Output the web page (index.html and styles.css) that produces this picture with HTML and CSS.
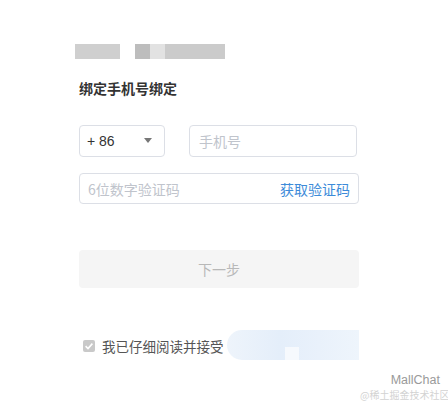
FILE: index.html
```html
<!DOCTYPE html>
<html lang="zh">
<head>
<meta charset="utf-8">
<title>绑定手机号</title>
<link rel="stylesheet" href="styles.css">
</head>
<body>
<div class="page">
  <div class="brand">
    <span class="blk blk-a"></span>
    <span class="blk blk-b"></span>
    <span class="blk blk-c"></span>
    <span class="blk blk-d"></span>
  </div>
  <h1 class="title">绑定手机号绑定</h1>
  <div class="row">
    <div class="field select">
      <span class="code">+ 86</span>
      <span class="caret"></span>
    </div>
    <div class="field phone"><span class="ph">手机号</span></div>
  </div>
  <div class="field sms">
    <span class="ph">6位数字验证码</span>
    <span class="get">获取验证码</span>
  </div>
  <div class="btn">下一步</div>
  <div class="agree">
    <span class="check">
      <svg width="12" height="12" viewBox="0 0 12 12"><path d="M2.6 6.2 L5 8.5 L9.4 3.6" fill="none" stroke="#fff" stroke-width="1.6"/></svg>
    </span>
    <span class="agree-text">我已仔细阅读并接受</span>
    <span class="blur"><span class="blur-in"></span></span>
  </div>
</div>
<div class="wm">
  <span class="wm-src">@稀土掘金技术社区</span>
  <span class="wm-name">MallChat</span>
</div>
</body>
</html>
```
FILE: styles.css
```css
html, body {
  margin: 0;
  padding: 0;
  background: #fff;
}
body {
  width: 448px;
  height: 404px;
  position: relative;
  overflow: hidden;
  font-family: "Noto Sans CJK SC", "Noto Sans", sans-serif;
}
.page {
  margin-left: 79px;
  width: 280px;
  padding-top: 44px;
}
.brand {
  display: flex;
  height: 15px;
  margin-left: -4px;
}
.blk { display: block; height: 15px; }
.blk-a { width: 45px; background: #cfcfcf; margin-right: 15px; }
.blk-b { width: 15px; background: #bdbdbd; }
.blk-c { width: 15px; background: #e2e2e2; }
.blk-d { width: 60px; background: #cbcbcb; }
.title {
  margin: 19px 0 0;
  font-size: 14px;
  line-height: 20px;
  font-weight: bold;
  color: #333;
}
.row {
  margin-top: 27px;
  display: flex;
  justify-content: space-between;
}
.field {
  box-sizing: border-box;
  border: 1px solid #dcdfe6;
  border-radius: 4px;
  display: flex;
  align-items: center;
  font-size: 14px;
}
.select {
  width: 86px;
  height: 32px;
  padding: 0 8px 0 7px;
  justify-content: space-between;
}
.code { color: #333; font-family: "Liberation Sans", "Noto Sans CJK SC", sans-serif; font-size: 14px; }
.caret {
  width: 0; height: 0;
  border-left: 4.5px solid transparent;
  border-right: 4.5px solid transparent;
  border-top: 5px solid #777;
  margin-right: 4px;
  margin-top: -2px;
}
.phone {
  width: 168px;
  height: 32px;
  margin-right: 2px;
  padding: 0 9px;
}
.ph { color: #c0c4cc; }
.sms {
  margin-top: 16px;
  width: 280px;
  height: 31px;
  padding: 0 8px 0 8px;
  justify-content: space-between;
}
.get { color: #3d8bd9; }
.btn {
  margin-top: 46px;
  height: 38px;
  border-radius: 4px;
  background: #f5f5f5;
  color: #b8b8b8;
  font-size: 14px;
  display: flex;
  align-items: center;
  justify-content: center;
}
.agree {
  margin-top: 42px;
  height: 30px;
  display: flex;
  align-items: center;
}
.check {
  width: 12px;
  height: 12px;
  margin-left: 4px;
  margin-top: 2px;
  border-radius: 2px;
  background: #c9c9c9;
  display: flex;
}
.agree-text {
  margin-left: 7px;
  font-size: 13.5px;
  color: #555;
  margin-top: 2px;
}
.blur {
  margin-left: 3px;
  flex: 1;
  height: 30px;
  border-radius: 15px 0 0 15px;
  background: linear-gradient(90deg, #eef4fb 0%, #e4eefa 40%, #e9f1fb 70%, #eef5fc 100%);
  position: relative;
}
.blur-in {
  position: absolute;
  left: 58px;
  bottom: 0;
  width: 14px;
  height: 13px;
  background: #f6f9fd;
}
.wm {
  position: absolute;
  right: 6px;
  bottom: 3px;
  width: 82px;
  height: 27px;
}
.wm-src {
  position: absolute;
  left: 0;
  bottom: 0;
  font-size: 10px;
  line-height: 12px;
  color: #d3d3d3;
  white-space: nowrap;
}
.wm-name {
  position: absolute;
  right: 2px;
  top: 0;
  font-family: "Liberation Sans", sans-serif;
  font-size: 12.5px;
  line-height: 13px;
  color: #9a9a9a;
}
```
